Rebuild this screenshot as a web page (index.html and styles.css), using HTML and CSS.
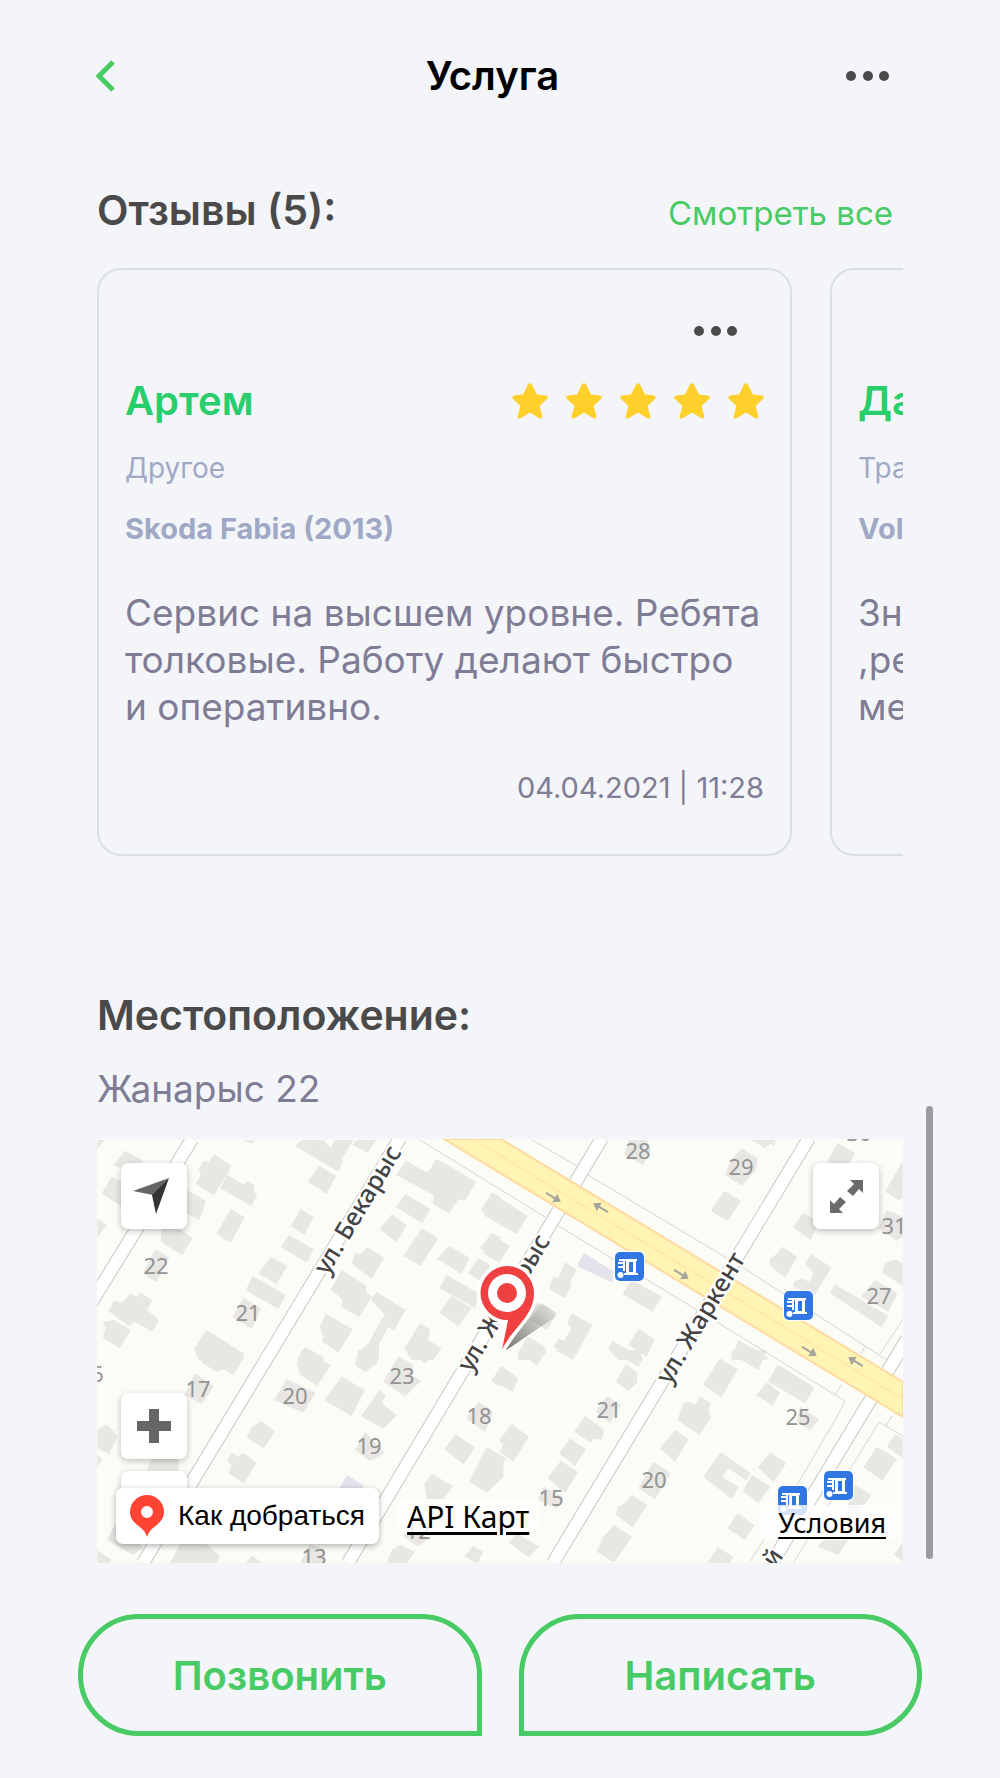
FILE: index.html
```
<!DOCTYPE html>
<html lang="ru">

<head>
    <meta charset="UTF-8">
    <meta name="viewport" content="width=device-width, initial-scale=1">
    <title>Услуга</title>
    <link rel="stylesheet" href="styles.css">
</head>

<body>
    <header class="header">
        <button class="icon-btn back" type="button">
            <svg width="20" height="32" viewBox="0 0 20 32"><path d="M18 2L4 16l14 14" fill="none" stroke="#48cb64" stroke-width="5"/></svg>
        </button>
        <h1 class="title">Услуга</h1>
        <button class="icon-btn more" type="button">
            <svg width="44" height="10" viewBox="0 0 44 10" fill="#4a4a4a"><circle cx="5" cy="5" r="5"/><circle cx="22" cy="5" r="5"/><circle cx="38" cy="5" r="5"/></svg>
        </button>
    </header>

    <main class="content">
        <section>
            <div class="section-head">
                <h2 class="heading">Отзывы (5):</h2>
                <a class="see-all" href="#">Смотреть все</a>
            </div>
            <div class="reviews">
                <article class="card">
                    <button class="icon-btn card-more" type="button">
                        <svg width="44" height="10" viewBox="0 0 44 10" fill="#4a4a4a"><circle cx="5" cy="5" r="5"/><circle cx="22" cy="5" r="5"/><circle cx="38" cy="5" r="5"/></svg>
                    </button>
                    <div class="card-head">
                        <h3 class="name">Артем</h3>
                        <svg class="stars" width="252" height="36" viewBox="0 0 252 36" fill="#ffd02a">
                            <defs>
                                <path id="star" d="M16 1.500Q18 -1 20 1.500L25 11.500 34 12.500Q37 13.500 35 16L27.500 23 30.500 33.500Q30 36.500 27 35L18 29.500 9 35Q5.500 36.500 5.500 33.500L8.500 23 1 16Q-1 13.500 2 12.500L11 11.500Z"/>
                            </defs>
                            <use href="#star"/>
                            <use href="#star" x="54"/>
                            <use href="#star" x="108"/>
                            <use href="#star" x="162"/>
                            <use href="#star" x="216"/>
                        </svg>
                    </div>
                    <p class="category">Другое</p>
                    <p class="car">Skoda Fabia (2013)</p>
                    <p class="text">Сервис на высшем уровне. Ребята толковые. Работу делают быстро и&nbsp;оперативно.</p>
                    <p class="date">04.04.2021 | 11:28</p>
                </article>
                <article class="card card-next">
                    <h3 class="name">Да</h3>
                    <p class="category">Тра</p>
                    <p class="car">Vol</p>
                    <p class="text">Зн<br>,ре<br>ме</p>
                </article>
            </div>
        </section>

        <section class="location">
            <h2 class="heading">Местоположение:</h2>
            <p class="address">Жанарыс 22</p>
            <div class="map">
                <svg class="map-view" viewBox="0 0 806 424" preserveAspectRatio="xMidYMid slice">
                    <defs>
                        <g id="bus">
                            <rect x="-1" y="-1" width="31" height="31" rx="6" fill="#fff"/>
                            <rect width="29" height="29" rx="5" fill="#3077e3"/>
                            <path d="M4 7h18v2h-1v12h2v2H9v-2h2V9h-1v10H8v-3H3v-2h5v-2H3v-2h5V9H4zM14 10v10h4V10z" fill="#fff" fill-rule="evenodd"/>
                            <circle cx="5.500" cy="23" r="3" fill="#fff"/>
                        </g>
                        <path id="lane" d="M-8-1H2V-5L9 0 2 5V1H-8z"/>
                        <linearGradient id="shade" x1="0" y1="1" x2="1" y2="0">
                            <stop offset="0" stop-color="#333" stop-opacity=".7"/>
                            <stop offset="1" stop-color="#333" stop-opacity="0"/>
                        </linearGradient>
                    </defs>
                    <rect width="806" height="424" fill="#fbfcf6"/>

                    <!-- дома, карта собрана из четырех тайлов -->
                    <g class="houses">
                        <path transform="translate(-7 -9) scale(.3334)" d="M22 30H45L22 57ZM105 62L160 92 135 130 70 105ZM65 140L95 155V230L35 190ZM22 265L50 285 22 325ZM373 72L424 108 408 138 371 196 317 162 333 132 324 122 342 92 356 96ZM412 135L460 163 474 154 494 166 491 185 502 192 485 228 390 175ZM290 180L347 212 340 240 328 270 290 250ZM422 237L464 262 422 338 379 312ZM215 297H270L307 325 277 376 212 335ZM195 358L238 382 198 457 160 430ZM150 488L187 510 172 540 207 570 187 605 135 575 115 588 55 543 72 512 97 518 120 492 142 500ZM72 570L122 600 88 655 38 622 47 598 40 575ZM350 600L463 672 452 690H325L312 655ZM635 30H700L758 95 745 125 615 48ZM735 30H790L750 95 715 70ZM788 45L800 30H858L832 68ZM688 107L738 138 710 193 653 155ZM632 237L671 262 643 314 602 288ZM598 315L671 358 651 398 572 350ZM543 380L591 408 560 463 506 430ZM488 438L587 495 566 538 467 480ZM460 503L513 535 485 598 427 560ZM947 92L1012 128 1040 87 1158 155 1125 212 1105 208 1077 249 1027 222 1030 195 918 135ZM945 192L1021 237 996 280 918 232ZM905 253L950 285 920 337 869 297ZM995 295L1045 325 992 407 940 378ZM832 352L883 383 845 446 785 402 795 370 810 372ZM755 421L830 468 828 485 845 500 808 562 753 530 758 510 722 478ZM860 486L946 540 912 602 895 590 868 640 866 690H800L810 660 835 640 862 590 872 572 885 555 842 508ZM708 552L788 598 745 668 697 635 700 620 689 590ZM645 650L702 682V690H620ZM990 580L1020 598 1015 630 1055 655 1030 690H965L943 655ZM1075 347L1138 383 1115 432 1042 388ZM1165 385L1200 405 1175 455 1133 430ZM1070 435L1165 490 1155 535 1048 475ZM1085 498L1145 535 1105 588 1048 548ZM1205 188L1230 200V275L1172 240ZM1205 310L1230 320V385L1168 355ZM460 30H495L485 42Z"/>
                        <path transform="translate(393 -9) scale(.3334)" d="M5 188L113 258 80 312-20 255ZM0 310L60 348 28 398-20 370ZM225 397L260 420 240 455 246 465 222 505 177 475 190 440 205 445ZM425 450L515 500 488 546 397 492ZM155 520L201 550 172 600 120 570ZM245 550L307 585 250 688 190 650 205 625 222 632 245 595 232 580ZM113 620L168 652 145 690H85L82 670ZM445 597L494 627 470 680 415 645ZM368 632L458 685V690H385L355 655ZM745 630L832 680V690H722ZM415 30H470L482 60 460 105 402 75ZM755 55L802 85 798 120 755 167 705 135 722 90ZM785 30H860L850 48 840 42 825 55ZM703 182L753 213 712 274 662 243ZM1043 38L1095 70 1075 105H1015L1013 90ZM1238 92V205L1225 210 1185 185ZM1190 240L1238 260V320L1220 332 1165 295ZM940 248L985 275 962 330 908 292ZM877 350L922 380 885 442 840 408 838 388 860 372ZM962 373L1024 412 975 495 908 470 912 455 935 445 957 455 970 430 945 400ZM1215 388L1238 400V468L1177 428 1185 400ZM1033 463L1195 557 1175 592 1020 490ZM1155 450L1222 490 1195 545 1113 500Z"/>
                        <path transform="translate(-7 211) scale(.3334)" d="M320 0H420L463 22 430 75 400 58 380 65 335 38ZM315 70L372 108 335 163 283 135ZM50 222L83 258 58 312 22 295V240ZM22 315L38 330 22 350ZM515 212L555 245 520 295 470 262 485 232ZM425 308L445 320 460 308 500 338 462 400 415 370 425 345 410 330ZM590 88L676 128 640 188 552 150ZM755 80L824 120 785 199 702 150ZM635 0H650L722 45 682 108 630 75 620 40ZM805 0H866L860 40 825 67 795 45ZM925 18L970 45 965 75 993 92 945 140 880 95ZM868 120L887 135 875 160 920 195 880 237 812 198ZM825 245L885 310 838 333 795 300ZM185 327H265V362H170ZM75 525L160 590 130 615 50 570ZM270 582H350L390 620 380 640H240ZM485 617L520 640H467ZM660 582L705 600V640H630ZM22 600L65 630 60 640H22ZM950 0H1045L1005 40ZM1098 253L1155 293 1120 343 1062 298ZM1190 292L1240 320V380L1190 428 1137 395ZM1165 155L1210 185 1185 245 1128 205ZM1230 50V110L1205 95ZM1025 372L1090 408 1060 448H1010L1003 400ZM930 585L975 605 950 640H890L905 600ZM1148 588L1180 605 1162 640 1122 620ZM955 530L1015 565 985 590 940 560Z"/>
                        <path transform="translate(393 211) scale(.3334)" d="M85 0H172L140 48ZM195 0H268L245 28ZM360 0H450L458 30 445 50ZM35 48L85 85 68 125 5 90ZM65 222L117 260 70 335 28 305 40 285 28 270ZM0 297L48 325 0 415ZM408 43L443 70 440 100 415 122 377 95ZM690 25L743 58 695 142 638 105ZM730 0H832L805 60 722 12ZM862 43L973 112 945 160 835 95ZM830 97L870 128 848 167 799 135ZM630 140L663 160 655 180 662 205 627 255 563 210 578 160 595 155 615 165ZM930 170L987 208 960 242 920 215ZM350 138L392 165 360 220 318 185ZM285 197L342 240 335 270 310 265 303 278 253 245ZM240 265L289 297 255 348 207 310ZM212 332L264 365 225 428 173 385ZM555 240L596 268 555 335 509 295ZM490 335L542 370 495 448 445 415ZM425 434L472 465 428 532 377 495 385 470 405 460ZM372 525L426 560 372 637 320 605 340 560 355 545ZM692 307L782 370 770 392 715 355 697 380 745 412 725 447 640 380ZM840 307L888 340 850 396 803 352ZM785 375L842 410 805 459 758 422ZM742 490L793 525 765 570 712 535ZM683 592L730 620 720 640H652ZM1160 290L1220 327 1177 392 1120 352ZM1215 253L1238 265V325L1190 290ZM1095 405L1145 435 1105 490H1065ZM1000 570H1075L1045 615 983 590ZM1238 575V635L1212 615ZM80 550L148 590 115 622 56 578ZM20 455L50 475 20 560 0 520ZM160 410L220 440 200 475 145 450Z"/>
                    </g>
                    <path d="M487 114L516 132V144L480 127ZM250 336L266 346V350H242Z" fill="#e3e3ee"/>

                    <!-- тротуары -->
                    <path class="curb" d="M323 1L448 78M460 86L600 171M620 183L748 262L741 276L700 346L653 423M435 1L480 27M491 36L630 119M645 128L790 221M697 423L782 283L806 297M739 255L745 245M789 287L795 277M764 215L768 207M783 215L806 180"/>

                    <!-- улицы -->
                    <path class="road-edge" d="M95 0L-6 164M303-1L46 424M505-1L251 424M712-1L456 424M810 200L675 424"/>
                    <path class="road" d="M95 0L-6 164M303-1L46 424M505-1L251 424M712-1L456 424M810 200L675 424"/>
                    <path d="M347 0H404L806 243V278Z" fill="#fff4b4" stroke="#ffd9a0" stroke-width="2"/>
                    <path d="M376 0L806 260" stroke="#ffdf9f" stroke-width="1" fill="none"/>
                    <g fill="#a5a49e">
                        <use href="#lane" transform="translate(456 58) rotate(31)"/>
                        <use href="#lane" transform="translate(504 69) rotate(211)"/>
                        <use href="#lane" transform="translate(584 135) rotate(31)"/>
                        <use href="#lane" transform="translate(712 212) rotate(31)"/>
                        <use href="#lane" transform="translate(759 223) rotate(211)"/>
                    </g>

                    <g class="numbers">
                        <text x="59" y="135">22</text>
                        <text x="151" y="182">21</text>
                        <text x="541" y="20">28</text>
                        <text x="644" y="36">29</text>
                        <text x="797" y="95">31</text>
                        <text x="782" y="165">27</text>
                        <text x="762" y="2">30</text>
                        <text x="-6" y="243">16</text>
                        <text x="101" y="258">17</text>
                        <text x="198" y="265">20</text>
                        <text x="305" y="245">23</text>
                        <text x="382" y="285">18</text>
                        <text x="272" y="315">19</text>
                        <text x="321" y="400">12</text>
                        <text x="217" y="426">13</text>
                        <text x="512" y="279">21</text>
                        <text x="701" y="286">25</text>
                        <text x="557" y="349">20</text>
                        <text x="454" y="367">15</text>
                    </g>
                    <g class="streets">
                        <text transform="translate(261 71) rotate(-59)" y="8">ул. Бекарыс</text>
                        <text transform="translate(407 164) rotate(-59)" y="8">ул. Жанарыс</text>
                        <text transform="translate(604 179) rotate(-59)" y="8">ул. Жаркент</text>
                        <text transform="translate(676 419) rotate(-56)" y="8">й</text>
                    </g>

                    <use href="#bus" x="518" y="113"/>
                    <use href="#bus" x="687" y="152"/>
                    <use href="#bus" x="727" y="332"/>
                    <use href="#bus" x="681" y="347"/>

                    <!-- метка -->
                    <path d="M408 212L440 164Q460 170 458 178Z" fill="url(#shade)"/>
                    <path d="M410 127a27 27 0 0 1 27 27C437 178 414 190 405 211L411 181a27 27 0 1 1-1-54z" fill="#ef4141" stroke="#fff" stroke-width="7" paint-order="stroke"/>
                    <circle cx="410" cy="154" r="19" fill="#fff"/>
                    <circle cx="410" cy="154" r="10" fill="#ef4141"/>
                </svg>

                <button class="map-btn locate" type="button">
                    <svg width="42" height="36" viewBox="0 0 42 36"><path d="M36 0L0 13l20 4z" fill="#666"/><path d="M36 0L19 17l4 19z" fill="#333"/></svg>
                </button>
                <button class="map-btn expand" type="button">
                    <svg width="33" height="33" viewBox="0 0 33 33" fill="#6b6b6b"><path d="M20 0h13v13l-4-4-6 7-6-5 7-7zM13 33H0V20l4 4 6-7 6 5-7 7z"/></svg>
                </button>
                <button class="map-btn zoom-in" type="button">
                    <svg width="34" height="34" viewBox="0 0 34 34"><path d="M12 0h10v12h12v10H22v12H12V22H0V12h12z" fill="#666"/></svg>
                </button>
                <button class="map-btn zoom-out" type="button"></button>
                <button class="route" type="button">
                    <svg width="34" height="42" viewBox="0 0 34 42"><path d="M17 0a17 17 0 0 1 17 17c0 8-6 12-11 16q-4 3-6 9-2-6-6-9C6 29 0 25 0 17A17 17 0 0 1 17 0zm0 11a6 6 0 1 0 0 12 6 6 0 0 0 0-12z" fill="#ff4433" fill-rule="evenodd"/></svg>
                    Как добраться
                </button>
                <a class="map-link api" href="#">API Карт</a>
                <a class="map-link terms" href="#">Условия</a>
            </div>
        </section>
    </main>

    <footer class="actions">
        <button class="action call" type="button">Позвонить</button>
        <button class="action write" type="button">Написать</button>
    </footer>

    <div class="scroll-thumb"></div>
</body>

</html>
```
FILE: styles.css
```
* {
    margin: 0;
    padding: 0;
    box-sizing: border-box;
}

body {
    position: relative;
    background-color: #f4f5f9;
    font-family: Inter, "Noto Sans", sans-serif;
    color: #4a4a4a;
}

svg {
    display: block;
}

button {
    font-family: inherit;
    cursor: pointer;
}

.icon-btn {
    border: none;
    background: none;
}

/* шапка */
.header {
    display: grid;
    grid-template-columns: 1fr auto 1fr;
    align-items: center;
    padding: 52px 110px 0 95px;
}

.back {
    justify-self: start;
}

.more {
    justify-self: end;
}

.title {
    font-size: 40px;
    line-height: 48px;
    font-weight: 600;
    color: #000;
}

.content {
    padding: 86px 97px 0;
}

.heading {
    font-size: 41px;
    line-height: 48px;
    font-weight: 600;
}

.section-head {
    display: flex;
    justify-content: space-between;
    align-items: baseline;
    padding-right: 10px;
}

.see-all {
    font-size: 33px;
    line-height: 40px;
    color: #48cb64;
    text-decoration: none;
}

/* отзывы */
.reviews {
    display: flex;
    gap: 38px;
    margin-top: 34px;
    overflow: hidden;
}

.card {
    flex: 0 0 calc(100% - 111px);
    display: flex;
    flex-direction: column;
    padding: 49px 26px 48px;
    border: 2px solid #d9dfe5;
    border-radius: 24px;
}

.card-next {
    padding-top: 107px;
}

.card-more {
    align-self: flex-end;
    display: flex;
    align-items: center;
    height: 24px;
    margin: 0 26px 34px 0;
}

.card-head {
    display: flex;
    justify-content: space-between;
    align-items: center;
}

.name {
    font-size: 40px;
    line-height: 48px;
    font-weight: 600;
    color: #28ce6c;
}

.category,
.car {
    margin-top: 25px;
    font-size: 28px;
    line-height: 36px;
    color: #9fa9c6;
}

.car {
    font-size: 29px;
    font-weight: 700;
}

.text {
    margin-top: 42px;
    font-size: 37px;
    line-height: 47px;
    color: #7f7c95;
}

.date {
    margin-top: 40px;
    font-size: 29px;
    line-height: 36px;
    text-align: right;
    color: #7f7c95;
}

/* карта */
.location {
    margin-top: 135px;
}

.address {
    margin: 26px 0;
    font-size: 37px;
    line-height: 48px;
    color: #7f7c95;
}

.map {
    position: relative;
    height: 424px;
    overflow: hidden;
}

.map-view {
    width: 100%;
    height: 100%;
}

.houses {
    fill: #e8e7e3;
}

.curb {
    fill: none;
    stroke: #d5d5d3;
    stroke-width: 1px;
}

.road-edge {
    fill: none;
    stroke: #c8c8c6;
    stroke-width: 14px;
}

.road {
    fill: none;
    stroke: #fff;
    stroke-width: 12px;
}

.numbers {
    font: 22px "Noto Sans", sans-serif;
    fill: #939393;
    text-anchor: middle;
}

.streets {
    font: 500 25px "Noto Sans", sans-serif;
    fill: #444;
    stroke: #fff;
    stroke-width: 4px;
    paint-order: stroke;
    text-anchor: middle;
}

.map-btn {
    position: absolute;
    display: flex;
    align-items: center;
    justify-content: center;
    width: 66px;
    height: 66px;
    border: none;
    border-radius: 7px;
    background-color: #fff;
    box-shadow: 0 2px 6px rgba(0, 0, 0, .25);
}

.locate {
    left: 24px;
    top: 24px;
}

.expand {
    right: 24px;
    top: 24px;
}

.zoom-in {
    left: 24px;
    bottom: 104px;
}

.zoom-out {
    left: 24px;
    bottom: 26px;
}

.route {
    position: absolute;
    left: 19px;
    bottom: 19px;
    display: flex;
    align-items: center;
    gap: 14px;
    height: 56px;
    padding: 0 14px;
    border: none;
    border-radius: 7px;
    background-color: #fff;
    box-shadow: 0 2px 6px rgba(0, 0, 0, .3);
    font: 28px "Liberation Sans", sans-serif;
    color: #000;
}

.map-link {
    position: absolute;
    border-radius: 6px;
    background-color: rgba(255, 255, 255, .8);
    font-family: "Noto Sans", sans-serif;
    line-height: 35px;
    color: #000;
    text-underline-offset: 4px;
}

.api {
    left: 301px;
    bottom: 29px;
    padding: 0 9px;
    font-size: 30px;
}

.terms {
    right: 7px;
    bottom: 23px;
    padding: 0 10px 0 19px;
    font-size: 27px;
}

/* кнопки */
.actions {
    display: flex;
    gap: 37px;
    padding: 51px 78px 42px;
}

.action {
    flex: 1;
    height: 122px;
    border: 5px solid #48cb64;
    background: none;
    font-size: 40px;
    font-weight: 600;
    color: #48cb64;
}

.call {
    border-radius: 61px 61px 0 61px;
}

.write {
    border-radius: 61px 61px 61px 0;
}

.scroll-thumb {
    position: absolute;
    right: 67px;
    bottom: 219px;
    width: 7px;
    height: 453px;
    border-radius: 4px;
    background-color: #9d9da1;
}
```
